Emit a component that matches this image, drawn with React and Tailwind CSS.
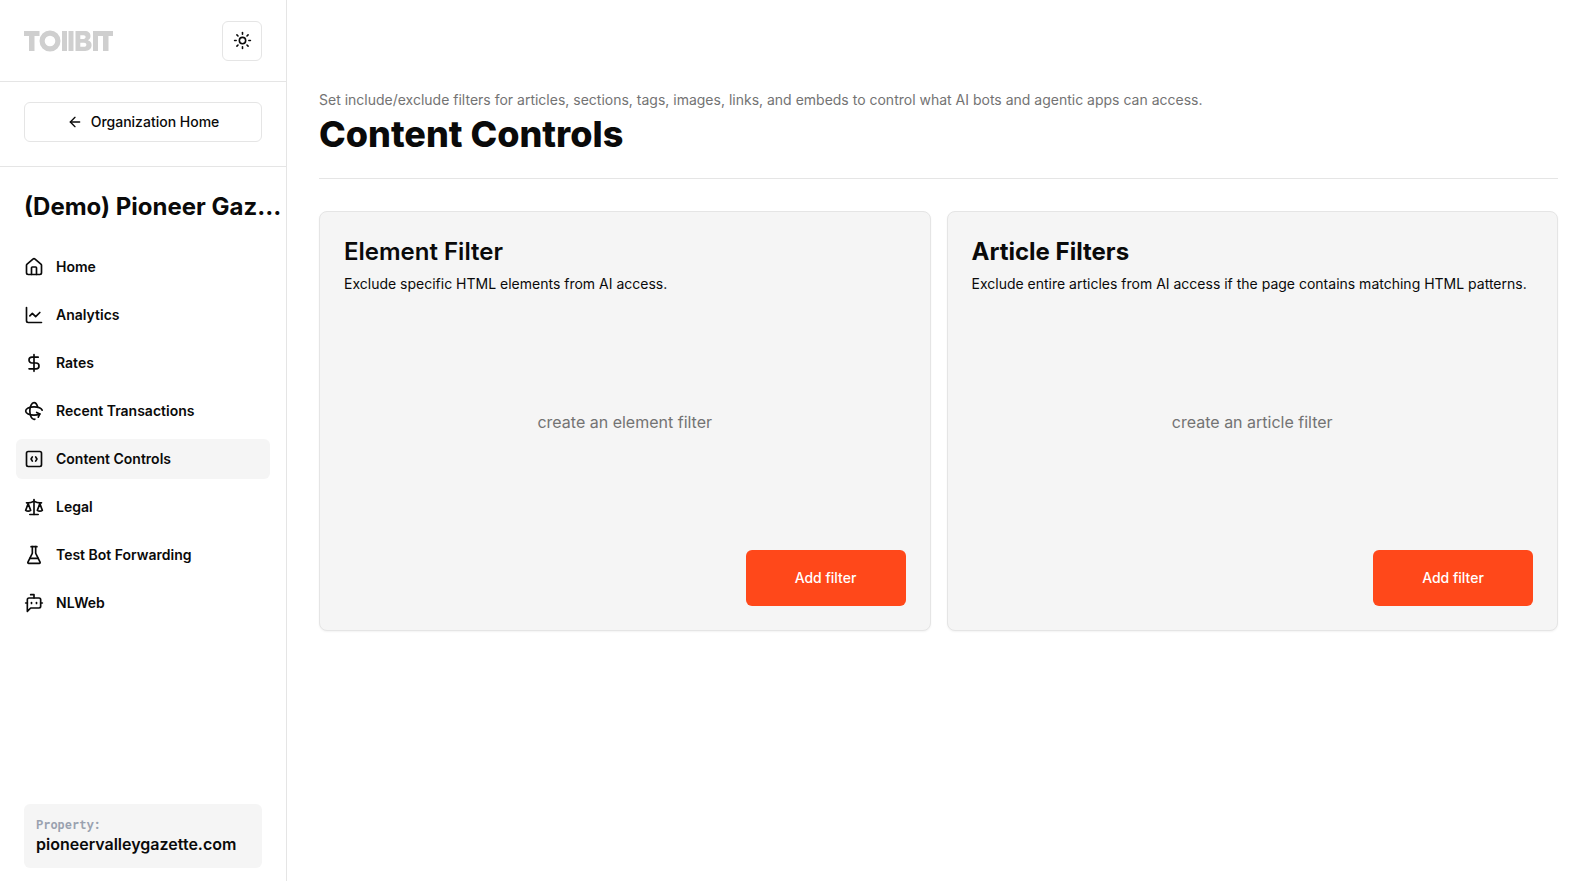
import { useState } from 'react';
import {
  House, ChartLine, DollarSign, Rotate3d, ArrowLeft, Sun,
} from 'lucide-react';

const iconProps = {
  viewBox: '0 0 24 24',
  fill: 'none',
  stroke: 'currentColor',
  strokeWidth: 2,
  strokeLinecap: 'round',
  strokeLinejoin: 'round',
};

function CodeSquareIcon({ className }) {
  return (
    <svg {...iconProps} className={className}>
      <rect x="3" y="3" width="18" height="18" rx="2" />
      <path d="M10 9.500 8.500 12l1.500 2.500" />
      <path d="m14 9.500 1.500 2.500-1.500 2.500" />
    </svg>
  );
}

function ScaleIcon({ className }) {
  return (
    <svg {...iconProps} className={className}>
      <path d="m16 16 3-8 3 8c-.87.65-1.92 1-3 1s-2.13-.35-3-1Z" />
      <path d="m2 16 3-8 3 8c-.87.65-1.92 1-3 1s-2.13-.35-3-1Z" />
      <path d="M7 21h10" />
      <path d="M12 3v18" />
      <path d="M3 7h2c2 0 5-1 7-2 2 1 5 2 7 2h2" />
    </svg>
  );
}

function FlaskIcon({ className }) {
  return (
    <svg {...iconProps} className={className}>
      <path d="M10 2v7.527a2 2 0 0 1-.211.896L4.72 20.55a1 1 0 0 0 .9 1.45h12.76a1 1 0 0 0 .9-1.45l-5.069-10.127A2 2 0 0 1 14 9.527V2" />
      <path d="M8.5 2h7" />
      <path d="M7 16h10" />
    </svg>
  );
}

function BotIcon({ className }) {
  return (
    <svg {...iconProps} className={className}>
      <path d="M12 6V2H8" />
      <path d="m8 18-4 4V8a2 2 0 0 1 2-2h12a2 2 0 0 1 2 2v8a2 2 0 0 1-2 2Z" />
      <path d="M2 12h2" />
      <path d="M9 11.5v1" />
      <path d="M15 11.5v1" />
      <path d="M20 12h2" />
    </svg>
  );
}

const NAV_ITEMS = [
  { label: 'Home', icon: House },
  { label: 'Analytics', icon: ChartLine },
  { label: 'Rates', icon: DollarSign },
  { label: 'Recent Transactions', icon: Rotate3d },
  { label: 'Content Controls', icon: CodeSquareIcon },
  { label: 'Legal', icon: ScaleIcon },
  { label: 'Test Bot Forwarding', icon: FlaskIcon },
  { label: 'NLWeb', icon: BotIcon },
];

function Logo() {
  return (
    <svg viewBox="0 0 89 22" className="w-[89px] h-[22px]" fill="#cfcfcf" role="img" aria-label="TollBit">
      <rect x="0" y="1" width="15.5" height="5" />
      <rect x="5" y="1" width="5.5" height="20" />
      <circle cx="26" cy="11" r="7.9" fill="none" stroke="#cfcfcf" strokeWidth="5.2" />
      <rect x="38" y="1" width="5" height="20" />
      <rect x="44.5" y="1" width="5" height="20" />
      <path
        fillRule="evenodd"
        d="M51.5 1h9.3c3.6 0 5.7 2 5.7 5 0 2-1 3.6-2.6 4.3 2.3.6 3.7 2.4 3.7 4.8 0 3.7-2.6 5.9-6.5 5.9h-9.6zM56.3 5.2v3.7h3.3c1.3 0 2-.7 2-1.85s-.7-1.85-2-1.85zM56.3 12.7v4.1h3.8c1.4 0 2.3-.8 2.3-2.05s-.9-2.05-2.3-2.05z"
      />
      <rect x="69" y="1" width="5" height="20" />
      <rect x="73.5" y="1" width="15.5" height="5" />
      <rect x="79" y="1" width="5.5" height="20" />
    </svg>
  );
}

function FilterCard({ title, titleClass, description, empty }) {
  return (
    <section className="flex flex-col rounded-lg border border-[#e5e5e5] bg-[#f5f5f5] p-6 shadow-xs">
      <h2 className={`text-2xl leading-8 ${titleClass}`}>{title}</h2>
      <p className="mt-1 text-sm leading-6">{description}</p>
      <div className="mb-0.5 flex h-[252px] items-center justify-center text-[#737373]">{empty}</div>
      <button className="h-14 w-40 self-end rounded-md bg-[#ff481a] text-sm font-medium text-white hover:bg-[#e63f15]">
        Add filter
      </button>
    </section>
  );
}

export default function App() {
  const [active, setActive] = useState('Content Controls');

  return (
    <div className="flex min-h-screen bg-white font-['Inter',sans-serif] text-[#0a0a0a]">
      <aside className="flex w-[287px] shrink-0 flex-col border-r border-[#e5e5e5]">
        <div className="flex h-[82px] items-center justify-between border-b border-[#e5e5e5] px-6">
          <Logo />
          <button aria-label="Toggle theme" className="flex size-10 items-center justify-center rounded-md border border-[#e5e5e5]">
            <Sun className="size-[19px]" />
          </button>
        </div>

        <div className="border-b border-[#e5e5e5] px-6 pt-5 pb-6">
          <button className="flex h-10 w-full items-center justify-center gap-2 rounded-md border border-[#e5e5e5] text-sm font-medium">
            <ArrowLeft className="size-4" />
            Organization Home
          </button>
        </div>

        <h2 className="pt-6 pl-6 text-2xl leading-8 font-bold whitespace-nowrap">(Demo) Pioneer Gaz…</h2>

        <nav className="mt-6 flex flex-col gap-2 px-4">
          {NAV_ITEMS.map(({ label, icon: Icon }) => (
            <a
              key={label}
              href="#"
              onClick={() => setActive(label)}
              className={`flex h-10 items-center gap-3 rounded-md px-2 text-sm font-semibold ${active === label ? 'bg-[#f5f5f5]' : ''}`}
            >
              <Icon className="size-5" />
              {label}
            </a>
          ))}
        </nav>

        <div className="mx-6 mt-auto mb-[13px] rounded-md bg-[#f5f5f5] p-3">
          <p className="font-['Roboto_Mono','DejaVu_Sans_Mono',monospace] text-xs font-bold text-gray-400">Property:</p>
          <p className="font-semibold">pioneervalleygazette.com</p>
        </div>
      </aside>

      <main className="min-w-0 flex-1 pt-[88px] pr-[30px] pl-8">
        <header className="border-b border-[#e5e5e5] pb-[22px]">
          <p className="text-sm leading-6 text-[#737373]">
            Set include/exclude filters for articles, sections, tags, images, links, and embeds to control what AI bots and agentic apps can access.
          </p>
          <h1 className="text-4xl leading-[44px] font-extrabold">Content Controls</h1>
        </header>

        <div className="mt-8 grid grid-cols-2 gap-4">
          <FilterCard
            title="Element Filter"
            titleClass="font-semibold"
            description="Exclude specific HTML elements from AI access."
            empty="create an element filter"
          />
          <FilterCard
            title="Article Filters"
            titleClass="font-bold"
            description="Exclude entire articles from AI access if the page contains matching HTML patterns."
            empty="create an article filter"
          />
        </div>
      </main>
    </div>
  );
}
